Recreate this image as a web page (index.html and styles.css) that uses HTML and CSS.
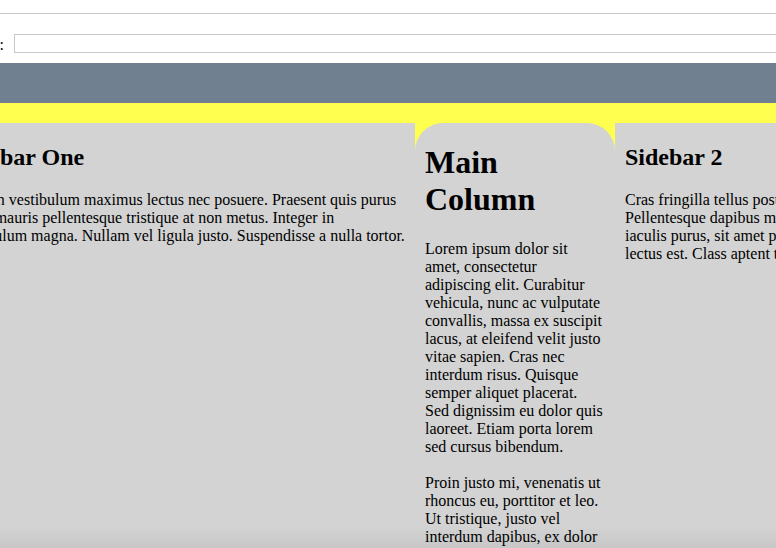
FILE: index.html
```html
<!DOCTYPE html>
<html lang="en">
<head>
<meta charset="utf-8">
<title>Layout</title>
<link rel="stylesheet" href="styles.css">
</head>
<body>
<div class="page">
  <div class="topbar"></div>
  <form class="search">
    <label class="search-label" for="q">Search:</label>
    <input class="search-input" id="q" type="text">
  </form>
  <div class="band"></div>
  <div class="stage">
    <aside class="col side-one">
      <h2>Sidebar One</h2>
      <p>Aenean vestibulum maximus lectus nec posuere. Praesent quis purus Proin mauris pellentesque tristique at non metus. Integer in vestibulum magna. Nullam vel ligula justo. Suspendisse a nulla tortor.</p>
    </aside>
    <main class="col main">
      <h1>Main Column</h1>
      <p>Lorem ipsum dolor sit amet, consectetur adipiscing elit. Curabitur vehicula, nunc ac vulputate convallis, massa ex suscipit lacus, at eleifend velit justo vitae sapien. Cras nec interdum risus. Quisque semper aliquet placerat. Sed dignissim eu dolor quis laoreet. Etiam porta lorem sed cursus bibendum.</p>
      <p>Proin justo mi, venenatis ut rhoncus eu, porttitor et leo. Ut tristique, justo vel interdum dapibus, ex dolor commodo nisi, at tempor lorem magna id enim.</p>
    </main>
    <aside class="col side-two">
      <h2>Sidebar 2</h2>
      <p>Cras fringilla tellus posuere, vel feugiat nunc tincidunt in.<br>Pellentesque dapibus mi vel arcu mollis, non fermentum<br>iaculis purus, sit amet pulvinar nibh. Sed ut tellus vel<br>lectus est. Class aptent taciti sociosqu ad litora torquent.</p>
    </aside>
  </div>
</div>
<div class="bottom-shade"></div>
</body>
</html>
```
FILE: styles.css
```css
html, body {
  margin: 0;
  padding: 0;
  overflow: hidden;
  background: #ffffff;
}

body {
  font-family: "Liberation Serif", "Times New Roman", serif;
  font-size: 16px;
  color: #000;
}

.page {
  margin-left: -54px;
  width: 1400px;
}

.topbar {
  height: 13px;
  border-bottom: 1px solid #c8c8c8;
}

.search {
  display: flex;
  align-items: center;
  padding: 20px 0 10px 0;
  margin: 0;
}

.search-label {
  width: 58px;
  text-align: right;
  font-size: 16px;
  line-height: 19px;
  position: relative;
  top: 1px;
}

.search-input {
  margin: 0 0 0 10px;
  width: 1200px;
  height: 19px;
  box-sizing: border-box;
  border: 1px solid #c8c8c8;
  padding: 0 2px;
  background: #fff;
  font: 13px "Liberation Sans", sans-serif;
}

.band {
  height: 40px;
  background: #708090;
}

.stage {
  display: flex;
  align-items: stretch;
  background: #ffff50;
  padding-top: 20px;
}

.col {
  background: #d3d3d3;
  padding: 1px 10px 0 10px;
  min-height: 600px;
}

.side-one {
  width: 451px;
  padding-right: 8px;
}

.main {
  width: 180px;
  border-radius: 28px 28px 0 0;
}

.main h1 {
  margin-top: 20.44px;
}

.main p {
  margin: 18px 0;
}

.side-two {
  width: 600px;
}

h1 {
  font-size: 32px;
  font-weight: bold;
  margin: 21.44px 0;
}

h2 {
  font-size: 24px;
  font-weight: bold;
  margin: 19.92px 0;
}

p {
  margin: 16px 0;
}

.bottom-shade {
  position: fixed;
  left: 0;
  right: 0;
  bottom: 0;
  height: 22px;
  background: linear-gradient(to bottom, rgba(0,0,0,0), rgba(0,0,0,0.05));
  pointer-events: none;
}
```
